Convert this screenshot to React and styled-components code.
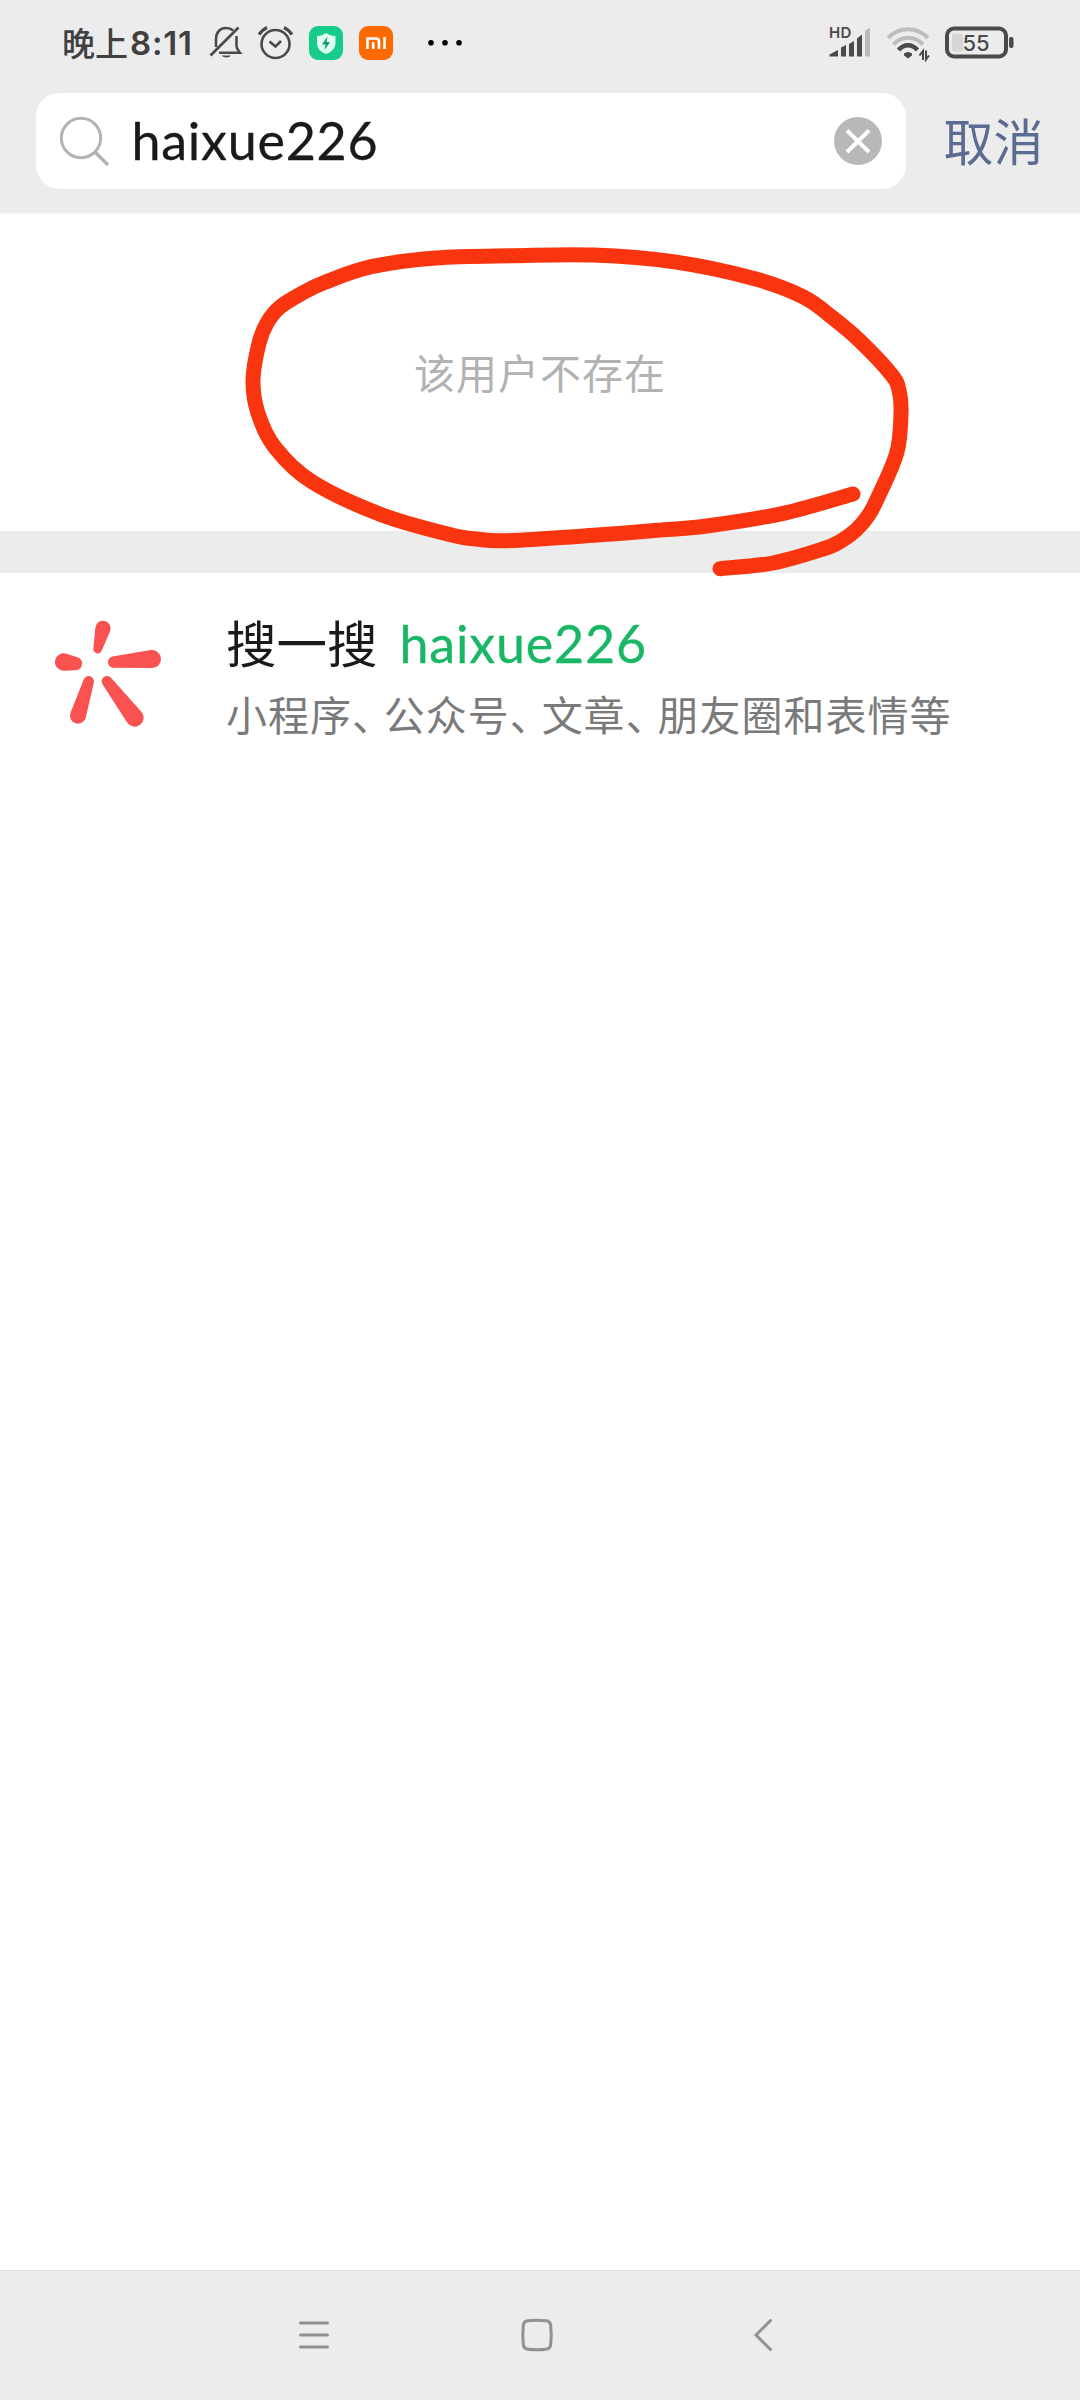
import React from "react"
import styled, { createGlobalStyle } from "styled-components"

const GlobalStyle = createGlobalStyle`
    *{
        box-sizing: border-box;
    }
    body{
        margin: 0;
        background-color: #fff;
        font-family: Lato, "Noto Sans CJK SC", sans-serif;
    }
    svg{
        display: block;
        flex: none;
        overflow: visible;
    }
`

const Screen = styled.div`
    position: relative;
    display: flex;
    flex-direction: column;
    width: 1080px;
    height: 2400px;
    overflow: hidden;
    background-color: #fff;
`

const Header = styled.header`
    height: 214px;
    background-color: #ececec;
    border-bottom: 1px solid #f4f4f4;
`

const StyledStatusBar = styled.div`
    display: flex;
    align-items: center;
    justify-content: space-between;
    height: 85px;
    padding: 0 66px 0 62px;

    .left, .right{
        display: flex;
        align-items: center;
    }
    .left{
        gap: 16px;
    }
    .right{
        gap: 15px;
    }
`

const Clock = styled.span`
    display: flex;
    align-items: center;
    width: 132px;
    font-size: 33px;
    font-weight: 500;
    line-height: 40px;
    color: #404040;
    white-space: nowrap;

    b{
        font-family: Inter, sans-serif;
        font-weight: 600;
        font-size: 33px;
        letter-spacing: 0.8px;
        margin-left: 2px;
    }
`

const StyledSearchBar = styled.div`
    display: flex;
    align-items: center;
    padding: 8px 0 0 36px;
`

const SearchField = styled.div`
    display: flex;
    flex: none;
    align-items: center;
    width: 870px;
    height: 96px;
    padding: 0 24px 0 23px;
    border-radius: 24px;
    background-color: #fff;

    .keyword{
        flex: 1;
        margin-left: 18.5px;
        padding-bottom: 2px;
        font-size: 52px;
        line-height: 94px;
        letter-spacing: 0.75px;
        color: #1a1a1a;
        -webkit-text-stroke: 0.3px #1a1a1a;
    }
`

const Cancel = styled.button`
    width: 102px;
    margin-left: 37.5px;
    padding: 2px 0 0;
    border: none;
    background: none;
    font-family: inherit;
    font-size: 50px;
    line-height: 94px;
    color: #5b6b92;
    text-align: left;
    white-space: nowrap;
`

const Empty = styled.div`
    display: flex;
    align-items: center;
    justify-content: center;
    height: 317px;
    padding-bottom: 4px;
    font-size: 41px;
    letter-spacing: 1px;
    color: #b2b2b2;
`

const Divider = styled.div`
    height: 42px;
    background-color: #ececec;
`

const StyledResult = styled.div`
    display: flex;
    align-items: flex-start;
    flex: 1;
    padding: 34px 54px 0;

    svg{
        margin-top: 1px;
    }
    .texts{
        padding-left: 64px;
    }
`

const Title = styled.div`
    display: flex;
    align-items: baseline;
    font-size: 50.5px;
    line-height: 72px;
    color: #1a1a1a;

    em{
        margin-left: 22px;
        font-style: normal;
        font-size: 52px;
        letter-spacing: 0.8px;
        color: #19b765;
        -webkit-text-stroke: 0.3px #19b765;
    }
`

const Desc = styled.div`
    font-size: 41px;
    line-height: 72px;
    letter-spacing: 1px;
    color: #7a7a7a;
    white-space: nowrap;

    i{
        font-style: normal;
        letter-spacing: -9.2px;
    }
`

const StyledNavBar = styled.nav`
    display: flex;
    align-items: center;
    gap: 187px;
    height: 130px;
    padding: 0 0 2px 296px;
    background-color: #ececec;
    border-top: 1px solid #dedede;

    svg:last-child{
        margin-left: 9px;
    }
`

const StyledMark = styled.svg`
    position: absolute;
    left: 0;
    top: 0;
    pointer-events: none;
`

const descParts = ["小程序", "公众号", "文章", "朋友圈和表情等"]

// hand drawn stroke, in screen coordinates
const markPoints = [
    [853, 494], [783.3, 513.3], [706.7, 526], [656.7, 530.3], [597, 535], [507, 540.7], [476, 539], [449.6, 534.5],
    [380.7, 514.5], [311.8, 481.7], [275, 447.5], [258, 413.3], [253, 380], [259, 343.3],
    [267, 323], [280, 307], [302.6, 293], [325.6, 282], [371.5, 266.7], [435.8, 258], [513.8, 255.7], [593, 255],
    [673, 261.7], [753, 278.3], [803, 296.7], [833, 318], [860, 341], [891, 374], [899, 390],
    [901, 413], [896.7, 453], [876.7, 500], [868, 516], [856, 530], [841, 541], [823, 549], [773, 563], [720, 568.7],
]

function smoothPath (pts) {
    let d = `M${pts[0][0]} ${pts[0][1]}`
    for (let i = 0; i < pts.length - 1; i++) {
        const p0 = pts[i - 1] || pts[i]
        const p1 = pts[i]
        const p2 = pts[i + 1]
        const p3 = pts[i + 2] || p2
        d += `C${p1[0] + (p2[0] - p0[0]) / 6} ${p1[1] + (p2[1] - p0[1]) / 6} `
        d += `${p2[0] - (p3[0] - p1[0]) / 6} ${p2[1] - (p3[1] - p1[1]) / 6} ${p2[0]} ${p2[1]}`
    }
    return d
}

// tapered capsule: narrow end first, wide end second
const petals = [
    [203, 177, 13, 219, 115, 23],
    [136, 221, 20, 101, 216, 26],
    [251, 216, 17, 366, 207, 27],
    [176, 274, 16, 144, 377, 24],
    [231, 274, 16, 314, 383, 27],
]

function petalPath ([x1, y1, r1, x2, y2, r2]) {
    const dist = Math.hypot(x2 - x1, y2 - y1)
    const base = Math.atan2(y2 - y1, x2 - x1)
    const off = Math.acos((r1 - r2) / dist)
    const at = (x, y, r, a) => `${x + r * Math.cos(a)} ${y + r * Math.sin(a)}`
    return `M${at(x1, y1, r1, base + off)}A${r1} ${r1} 0 0 1 ${at(x1, y1, r1, base - off)}`
        + `L${at(x2, y2, r2, base - off)}A${r2} ${r2} 0 1 1 ${at(x2, y2, r2, base + off)}Z`
}

function BellOff () {
    return (
    <svg width="32" height="34" viewBox="0 0 32 34" fill="none" stroke="#4a4a4a" strokeWidth="2.6">
        <path d="M6 21V13C6 6 10.500 2 16 2C19 2 21.500 3 23.200 4.500M26.500 10V20C26.500 23 28.500 25 30 26.800H9" />
        <path d="M0.500 29.500L28.500 1.500" />
        <path d="M11.500 29.500H21C19.500 32 13.500 32 11.500 29.500Z" fill="#4a4a4a" stroke="none" />
    </svg>)
}

function Alarm () {
    return (
    <svg width="36" height="34" viewBox="0 0 36 34" fill="none" stroke="#4a4a4a">
        <circle cx="17.500" cy="18" r="14" strokeWidth="2.600" />
        <path d="M11.500 15.500L17.500 20.500L23 15" strokeWidth="2.600" />
        <path d="M1 8.500Q4 4 9 1.500M34 8.500Q31 4 26 1.500" strokeWidth="3.200" />
    </svg>)
}

function Guard () {
    return (
    <svg width="34" height="34" viewBox="1 0 34 34">
        <rect width="34" height="34" rx="9" fill="#17cb8b" />
        <path d="M17 7C20 9 23 9.700 26.500 10V17C26.500 22.500 22.500 26 17 28C11.500 26 8 22.500 8 17V10C11.500 9.700 14 9 17 7Z" fill="#dffff2" />
        <path d="M18.500 10.500L13 18.500H16.500L15.500 24L21 16H17.500Z" fill="#17996c" />
    </svg>)
}

function MiLogo () {
    return (
    <svg width="34" height="34" viewBox="1 0 34 34">
        <rect width="34" height="34" rx="9" fill="#fe6a00" />
        <path d="M8.500 23V12.500H17Q20 12.500 20 15.500V23M14.200 16V23M25.500 11V23" fill="none" stroke="#fff" strokeWidth="2.600" />
    </svg>)
}

function Signal () {
    return (
    <svg width="42" height="34" viewBox="0 0.5 42 34">
        <text x="0" y="12" fontSize="15" fontWeight="600" fontFamily="Inter, sans-serif" letterSpacing="0.3" fill="#4a4a4a">HD</text>
        <g fill="#4a4a4a">
            <path d="M0.500 31V29L9 24.500V31Z" />
            <path d="M12 31V22L17 19.500V31Z" />
            <path d="M20 31V18.500L25 15.500V31Z" />
            <path d="M28 31V13L33 9V31Z" />
        </g>
        <path d="M36 31V5L41 2.500V31Z" fill="#b9b9b9" />
    </svg>)
}

function Wifi () {
    return (
    <svg width="44" height="34" viewBox="-0.5 0 44 34" fill="none" strokeWidth="4">
        <path d="M1.500 12C13 0.300 30 0.300 41.500 12" stroke="#bdbdbd" />
        <path d="M7 18.500C15 9.500 28 9.500 36.500 18.500" stroke="#bdbdbd" />
        <path d="M12 24C17.500 17.500 25.500 17.500 31 24" stroke="#4a4a4a" strokeWidth="4.500" />
        <path d="M17.500 27.500Q21.500 24.500 25.500 27.500V29.500L21.500 32.500L17.500 29.500Z" fill="#4a4a4a" stroke="none" />
        <path d="M36.500 34V25L33 29.500M39.500 24.500V33.500L42.500 29.500" stroke="#4a4a4a" strokeWidth="2" />
    </svg>)
}

function Battery () {
    return (
    <svg width="69" height="32" viewBox="0 0.5 69 32">
        <rect x="2" y="2" width="59" height="28" rx="7" fill="none" stroke="#4a4a4a" strokeWidth="4" />
        <rect x="7" y="7" width="11" height="18" rx="2" fill="#d6d6d6" />
        <rect x="64" y="10.500" width="4.500" height="11" rx="2" fill="#4a4a4a" />
        <text x="31" y="24" textAnchor="middle" fontSize="22" fontWeight="500" fontFamily="Inter, sans-serif" fill="#4a4a4a">55</text>
    </svg>)
}

function StatusBar () {
    return (
    <StyledStatusBar>
        <div className="left">
            <Clock>晚上<b>8:11</b></Clock>
            <BellOff />
            <Alarm />
            <Guard />
            <MiLogo />
            <svg width="70" height="34" viewBox="0 0 70 34">
                {[21, 35, 49].map((cx) => <circle key={cx} cx={cx} cy="16.800" r="2.800" fill="#000" />)}
            </svg>
        </div>
        <div className="right">
            <Signal />
            <Wifi />
            <Battery />
        </div>
    </StyledStatusBar>)
}

function SearchBar ({keyword}) {
    return (
    <StyledSearchBar>
        <SearchField>
            <svg width="54" height="54" viewBox="0 0 54 54" fill="none" stroke="#b3b3b3" strokeWidth="3">
                <circle cx="22" cy="24" r="19.700" />
                <path d="M36 38L49 51" strokeWidth="3.500" />
            </svg>
            <span className="keyword">{keyword}</span>
            <svg width="48" height="48" viewBox="0 0 48 48">
                <circle cx="24" cy="24" r="24" fill="#b8b8b8" />
                <path d="M13 13.500L35 35M35 13.500L13 35" stroke="#fff" strokeWidth="4" />
            </svg>
        </SearchField>
        <Cancel>取消</Cancel>
    </StyledSearchBar>)
}

function Result ({keyword}) {
    return (
    <StyledResult>
        <svg width="108" height="132" viewBox="72 54 324 396" fill="#fa5151">
            {petals.map((petal, idx) => <path key={idx} d={petalPath(petal)} />)}
        </svg>
        <div className="texts">
            <Title>搜一搜<em>{keyword}</em></Title>
            <Desc>
                {descParts.map((part, idx) => (
                    <React.Fragment key={part}>{idx > 0 && <i>、</i>}{part}</React.Fragment>
                ))}
            </Desc>
        </div>
    </StyledResult>)
}

function NavBar () {
    return (
    <StyledNavBar>
        <svg width="36" height="36" viewBox="0 0 36 36" stroke="#919191" strokeWidth="3" strokeLinecap="round">
            <path d="M4.500 6H31.500M4.500 18H31.500M4.500 30H31.500" />
        </svg>
        <svg width="36" height="36" viewBox="0 0 36 36" fill="none" stroke="#919191" strokeWidth="3">
            <path d="M9 3.800Q18 2.800 27 3.800Q31.300 4.200 31.700 8.500Q32.700 18 31.700 27.500Q31.300 31.800 27 32.200Q18 33.200 9 32.200Q4.700 31.800 4.300 27.500Q3.300 18 4.300 8.500Q4.700 4.200 9 3.800Z" />
        </svg>
        <svg width="24" height="36" viewBox="0 0 24 36" fill="none" stroke="#919191" strokeWidth="3" strokeLinecap="round">
            <path d="M19.500 3.500L5 18L19.500 32.500" />
        </svg>
    </StyledNavBar>)
}

function App () {

    const keyword = "haixue226"

    return (
    <Screen>
        <GlobalStyle />
        <Header>
            <StatusBar />
            <SearchBar keyword={keyword} />
        </Header>
        <Empty>该用户不存在</Empty>
        <Divider />
        <Result keyword={keyword} />
        <NavBar />
        <StyledMark width="1080" height="620" viewBox="0 0 1080 620">
            <path d={smoothPath(markPoints)} fill="none" stroke="#f8350f" strokeWidth="15" strokeLinecap="round" strokeLinejoin="round" />
        </StyledMark>
    </Screen>)
}

export default App
